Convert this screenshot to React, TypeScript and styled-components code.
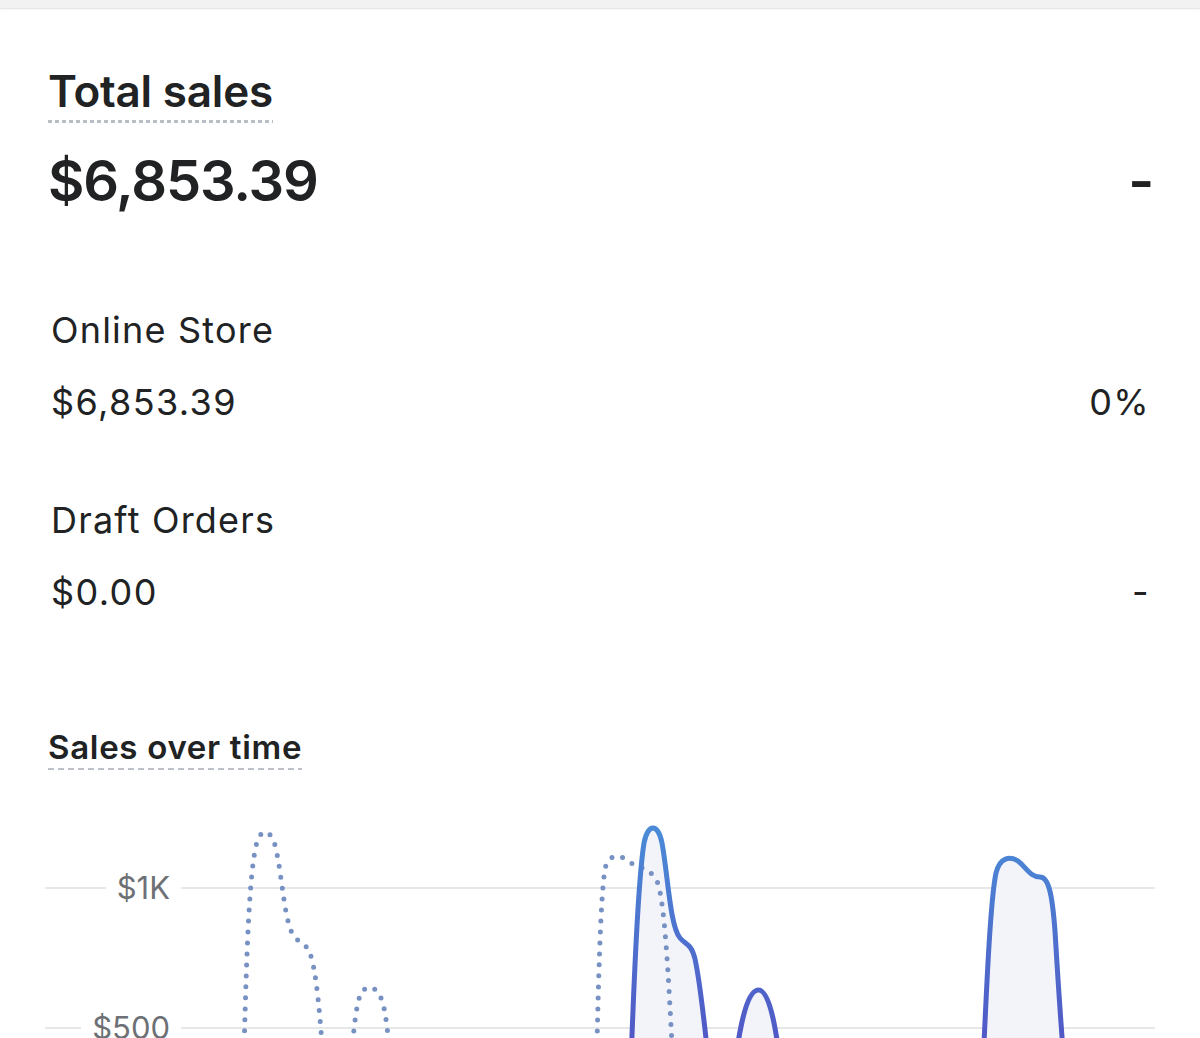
import React from "react"
import styled, { createGlobalStyle } from "styled-components"

const GlobalStyle = createGlobalStyle`
  html, body {
    margin: 0;
    padding: 0;
    background: #ffffff;
    overflow: hidden;
  }
  body {
    font-family: Inter, "Liberation Sans", Arial, sans-serif;
    color: #202223;
    -webkit-font-smoothing: antialiased;
  }
`

const TopStrip = styled.div`
  height: 8px;
  background: #f2f2f2;
  border-bottom: 1px solid #e7e7e7;
  box-shadow: 0 1px 2px rgba(0, 0, 0, 0.04);
`

const Card = styled.div`
  padding: 56px 47px 0 48px;
  display: flex;
  flex-direction: column;
`

const Heading = styled.div<{ $size: number; $line: number; $pad: number; $spacing: number }>`
  align-self: flex-start;
  font-size: ${({ $size }) => $size}px;
  line-height: ${({ $line }) => $line}px;
  font-weight: 600;
  letter-spacing: ${({ $spacing }) => $spacing}px;
  padding-bottom: ${({ $pad }) => $pad}px;
  background-repeat: repeat-x;
  background-position: left bottom;
`

const TitleDots = styled(Heading)`
  background-image: linear-gradient(to right, #b9bec4 0 4px, transparent 4px 100%);
  background-size: 7px 3px;
`

const SectionDash = styled(Heading)`
  background-image: linear-gradient(to right, #bcc2c8 0 6px, transparent 6px 100%);
  background-size: 10px 2px;
`

const TotalRow = styled.div`
  margin-top: 22px;
  display: flex;
  justify-content: space-between;
  align-items: baseline;
  font-size: 56px;
  line-height: 72px;
  font-weight: 600;
  letter-spacing: -1.2px;
`

const Channel = styled.div<{ $first?: boolean }>`
  display: flex;
  flex-direction: column;
  gap: 28px;
  margin-top: ${({ $first }) => ($first ? 91 : 74)}px;
`

const ChannelName = styled.div`
  font-size: 36px;
  line-height: 44px;
  font-weight: 400;
  letter-spacing: 1.2px;
  padding-left: 3px;
`

const ChannelRow = styled.div`
  display: flex;
  justify-content: space-between;
  font-size: 36px;
  line-height: 44px;
  font-weight: 400;
  letter-spacing: 1.4px;
  padding: 0 3px 0 3px;
`

const ChartBlock = styled.div`
  margin-top: 113px;
  display: flex;
  flex-direction: column;
`

const ChartSvg = styled.svg`
  display: block;
  margin: 31px 0 0 -3px;
`

const channels = [
  { name: "Online Store", value: "$6,853.39", change: "0%" },
  { name: "Draft Orders", value: "$0.00", change: "-" },
]

const prevPath = [
  "M 243 1085 C 246 980, 248 880, 256 845 C 260 826, 271 826, 276 848 C 282 875, 284 915, 292 932 C 297 942, 304 940, 309 950 C 316 965, 320 1010, 325 1085",
  "M 350 1085 C 352 1040, 356 998, 362 991 C 367 984, 375 985, 380 995 C 386 1005, 389 1040, 392 1085",
  "M 596 1085 C 598 1000, 600 900, 605 868 C 608 854, 618 852, 628 860 C 636 866, 648 866, 656 878 C 664 892, 668 960, 674 1085",
]

const currPath = [
  "M 630 1085 C 634 980, 638 880, 644 842 C 648 822, 658 822, 662 842 C 668 875, 670 925, 680 937 C 686 944, 691 942, 695 958 C 701 985, 706 1035, 711 1085",
  "M 733 1085 C 737 1040, 745 990, 758 989 C 770 988, 777 1030, 783 1085",
  "M 982 1085 C 986 1000, 990 900, 996 872 C 1000 856, 1010 855, 1018 860 C 1026 866, 1030 876, 1040 876 C 1048 876, 1052 890, 1055 930 C 1058 980, 1062 1040, 1066 1085",
]

const Chart = () => (
  <ChartSvg width={1110} height={280} viewBox="45 800 1110 280">
    <defs>
      <linearGradient id="line" gradientUnits="userSpaceOnUse" x1="0" y1="830" x2="0" y2="1040">
        <stop offset="0" stopColor="#4a8ad6" />
        <stop offset="1" stopColor="#5158c6" />
      </linearGradient>
    </defs>
    <g stroke="#e6e7e9" strokeWidth={2}>
      <line x1={45} y1={887} x2={106} y2={887} />
      <line x1={181} y1={887} x2={1155} y2={887} />
      <line x1={45} y1={1027} x2={81} y2={1027} />
      <line x1={181} y1={1027} x2={1155} y2={1027} />
    </g>
    <g fill="#6d7175" fontSize={31} fontFamily="Inter, 'Liberation Sans', sans-serif" textAnchor="end">
      <text x={170} y={898}>$1K</text>
      <text x={170} y={1038}>$500</text>
    </g>
    {currPath.map((d, i) => (
      <path key={"f" + i} d={d + " Z"} fill="#f3f4fa" />
    ))}
    {prevPath.map((d, i) => (
      <path
        key={"p" + i}
        d={d}
        fill="none"
        stroke="#7791c3"
        strokeWidth={5}
        strokeLinecap="round"
        strokeDasharray="0 11"
      />
    ))}
    {currPath.map((d, i) => (
      <path
        key={"c" + i}
        d={d}
        fill="none"
        stroke="url(#line)"
        strokeWidth={5}
        strokeLinecap="round"
        strokeLinejoin="round"
      />
    ))}
  </ChartSvg>
)

export default function App() {
  return (
    <>
      <GlobalStyle />
      <TopStrip />
      <Card>
        <TitleDots $size={44} $line={52} $pad={6} $spacing={-0.2}>
          Total sales
        </TitleDots>
        <TotalRow>
          <span>$6,853.39</span>
          <span>-</span>
        </TotalRow>
        {channels.map((c, i) => (
          <Channel key={c.name} $first={i === 0}>
            <ChannelName>{c.name}</ChannelName>
            <ChannelRow>
              <span>{c.value}</span>
              <span>{c.change}</span>
            </ChannelRow>
          </Channel>
        ))}
        <ChartBlock>
          <SectionDash $size={33} $line={40} $pad={3} $spacing={0.7}>
            Sales over time
          </SectionDash>
          <Chart />
        </ChartBlock>
      </Card>
    </>
  )
}
